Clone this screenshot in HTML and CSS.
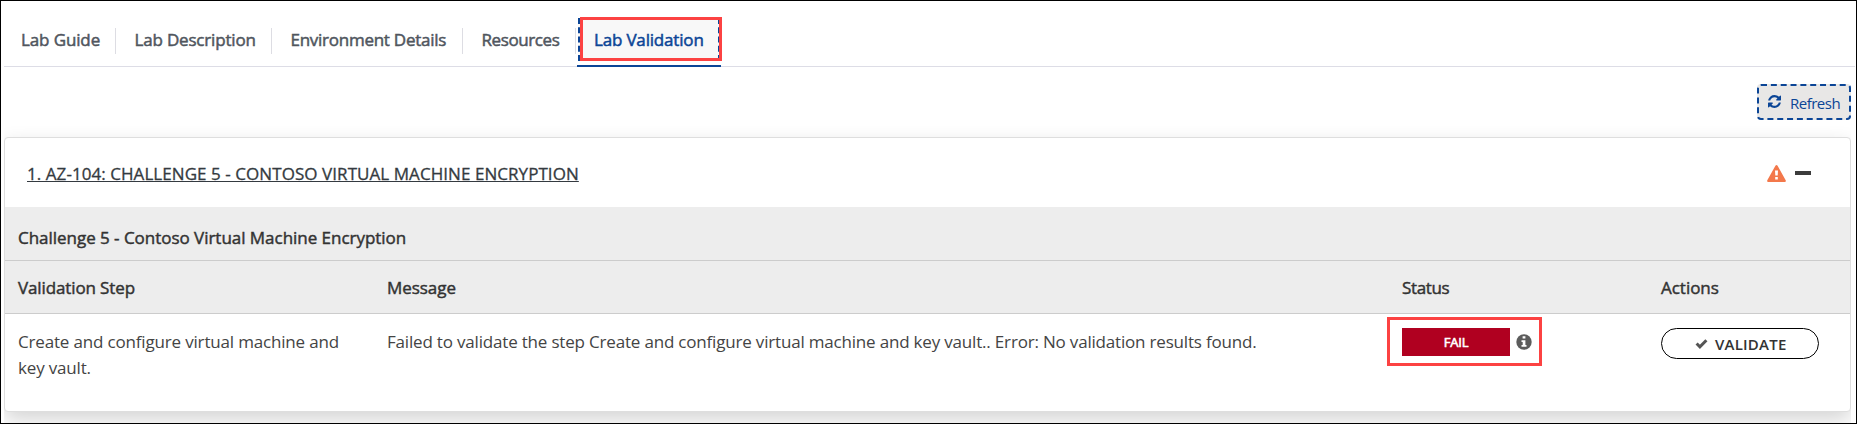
FILE: index.html
```html
<!DOCTYPE html>
<html lang="en">
<head>
<meta charset="utf-8">
<title>Lab Validation</title>
<link rel="stylesheet" href="styles.css">
</head>
<body>
<div class="frame">
  <nav class="tabs">
    <a class="tab tab-guide">Lab Guide</a>
    <a class="tab tab-desc">Lab Description</a>
    <a class="tab tab-env">Environment Details</a>
    <a class="tab tab-res">Resources</a>
    <a class="tab active"><span>Lab Validation</span><i class="callout callout-tab"></i></a>
  </nav>
  <main class="content">
    <div class="toolbar">
      <button class="refresh">
        <svg width="13" height="13" viewBox="0 0 1536 1536"><path fill="currentColor" d="M1511 928q0 5-1 7-64 268-268 434.500T764 1536q-146 0-282.500-55T238 1324l-129 129q-19 19-45 19t-45-19-19-45V960q0-26 19-45t45-19h448q26 0 45 19t19 45-19 45l-137 137q71 66 161 102t187 36q134 0 250-65t186-179q11-17 53-117 8-23 30-23h192q13 0 22.500 9.500t9.500 22.500zm25-800v448q0 26-19 45t-45 19h-448q-26 0-45-19t-19-45 19-45l138-138Q969 256 768 256q-134 0-250 65T332 500q-11 17-53 117-8 23-30 23H50q-13 0-22.500-9.500T18 608v-7q65-268 270-434.500T768 0q146 0 284 55.500T1297 212l130-129q19-19 45-19t45 19 19 45z"/></svg>
        <span>Refresh</span>
      </button>
    </div>
    <section class="card">
      <header class="card-head">
        <a class="title">1. AZ-104: CHALLENGE 5 - CONTOSO VIRTUAL MACHINE ENCRYPTION</a>
        <svg class="warn" width="19" height="17" viewBox="0 0 19 17"><path fill="#f3784b" fill-rule="evenodd" d="M8.400.7q1.100-1.300 2.200 0l8.100 14.500q.6 1.600-.9 1.800H1.200q-1.500-.2-.9-1.800zM8 5.500l.3 5h2.400l.3-5zM8.200 12v2.500h2.600V12z"/></svg>
        <span class="minus"></span>
      </header>
      <div class="group">Challenge 5 - Contoso Virtual Machine Encryption</div>
      <div class="row head">
        <div>Validation Step</div>
        <div class="h-msg">Message</div>
        <div class="h-status">Status</div>
        <div class="h-act">Actions</div>
      </div>
      <div class="row data">
        <div class="text">Create and configure virtual machine and<br>key vault.</div>
        <div class="text message">Failed to validate the step Create and configure virtual machine and key vault.. Error: No validation results found.</div>
        <div class="status">
          <span class="badge">FAIL</span>
          <svg width="16" height="16" viewBox="0 0 16 16"><circle cx="8" cy="8" r="7.700" fill="#5c5c5c"/><path fill="#fff" d="M6.600 2.200h2.800v2.200H6.600zM5.500 6.200h3.900v4.900h1.100v1.700h-5v-1.700h1.200V7.900H5.500z"/></svg>
          <i class="callout callout-status"></i>
        </div>
        <div>
          <button class="validate">
            <svg width="13" height="11" viewBox="0 0 13 11"><path d="M1.600 5.500l3.300 3.300 6.500-6.600" fill="none" stroke="#555" stroke-width="3"/></svg>
            <span>VALIDATE</span>
          </button>
        </div>
      </div>
    </section>
  </main>
</div>
</body>
</html>
```
FILE: styles.css
```css
* { box-sizing: border-box; }

body {
  margin: 0;
  background: #fff;
  color: #333;
  font: 17px/26px "Open Sans", "Noto Sans", sans-serif;
}

button { font-family: inherit; margin: 0; }
svg { display: block; flex: none; }

.frame {
  height: 424px;
  border: 1px solid #000;
  padding: 0 1px 0 3px;
  overflow: hidden;
}

/* Tabs */
.tabs {
  display: flex;
  height: 66px;
  padding-top: 17px;
  border-bottom: 1px solid #dddde6;
}

.tab {
  position: relative;
  height: 44px;
  padding: 9px 0 0 18.500px;
  color: #50565e;
  -webkit-text-stroke: 0.5px;
  white-space: nowrap;
}

.tab:not(.active)::after {
  content: "";
  position: absolute;
  right: 0;
  top: 10px;
  width: 1px;
  height: 26px;
  background: #dddde3;
}

.tab-guide { width: 112px; padding-left: 17px; letter-spacing: -0.12px; }
.tab-desc { width: 156px; letter-spacing: -0.18px; }
.tab-env { width: 191px; letter-spacing: -0.26px; }
.tab-res { width: 113px; letter-spacing: -0.4px; }

.active {
  width: 144px;
  height: 49px;
  margin-left: 1px;
  padding: 0 0 0 1px;
  color: #0b4596;
  letter-spacing: -0.18px;
  border-bottom: 2px solid #0b4596;
}

.active span {
  display: block;
  width: 142px;
  height: 43px;
  padding: 9px 0 0 14px;
  background: #f8f8f8;
  border: dashed #0b4596;
  border-width: 0 2px;
}

.callout {
  position: absolute;
  border: 3px solid #fc4242;
}

.callout-tab { left: 3px; top: -1px; width: 142px; height: 44px; }

/* Toolbar and card */
.content {
  width: 1847px;
  height: 356px;
  overflow: hidden;
}

.toolbar {
  display: flex;
  justify-content: flex-end;
  height: 70px;
  padding-top: 17px;
}

.refresh {
  display: flex;
  align-items: center;
  gap: 9px;
  width: 94px;
  height: 36px;
  padding: 2px 0 0 9px;
  color: #0b4596;
  background: #e8e7e6;
  border: 2px dashed #0b4596;
  border-radius: 4px;
  font-size: 15px;
  line-height: 24px;
  letter-spacing: -0.5px;
}

.refresh svg { margin-top: -4px; }

.card {
  height: 275px;
  background: #fff;
  border: 1px solid #dedede;
  border-radius: 4px;
  overflow: hidden;
  box-shadow: 0 8px 20px rgba(0, 0, 0, 0.17);
}

.card-head {
  display: flex;
  align-items: center;
  height: 69px;
  padding: 2px 39px 0 22px;
}

.title {
  margin-right: auto;
  color: #343a40;
  letter-spacing: 0.06px;
  text-decoration: underline 1px;
  text-underline-offset: 1px;
  text-decoration-skip-ink: none;
  -webkit-text-stroke: 0.3px;
}

.warn { margin: -1px 9px 0 0; }
.minus { width: 16px; height: 4px; margin-top: -2px; background: #3c3c3c; }

.group, .head {
  background: #ededed;
  border-bottom: 1px solid #ccc;
  -webkit-text-stroke: 0.45px;
}

.group {
  height: 54px;
  padding: 18px 13px 0;
  letter-spacing: -0.03px;
}

.row {
  display: grid;
  grid-template-columns: 369px 1015px 259px 1fr;
  padding-left: 13px;
}

.head { height: 53px; padding-top: 14px; letter-spacing: -0.12px; }
.h-msg { letter-spacing: -0.05px; }
.h-status { letter-spacing: -0.35px; }
.h-act { letter-spacing: -0.02px; }

.data { padding-top: 14px; }
.text { padding-top: 1px; color: #444; letter-spacing: -0.17px; white-space: nowrap; }
.message { letter-spacing: -0.186px; }

.status {
  position: relative;
  display: flex;
  align-items: center;
  gap: 6px;
  height: 28px;
}

.badge {
  width: 108px;
  height: 28px;
  background: #b00020;
  color: #fff;
  font-size: 13px;
  line-height: 29px;
  letter-spacing: -0.2px;
  text-align: center;
  -webkit-text-stroke: 0.6px;
}

.callout-status { left: -15px; top: -11px; width: 155px; height: 49px; }

.validate {
  display: flex;
  align-items: center;
  gap: 7px;
  width: 158px;
  height: 31px;
  padding: 0 0 0 33px;
  color: #333;
  background: #fff;
  border: 1px solid #000;
  border-radius: 16px;
  font-size: 15px;
  font-weight: 600;
  line-height: 24px;
  letter-spacing: 0.22px;
}
```
